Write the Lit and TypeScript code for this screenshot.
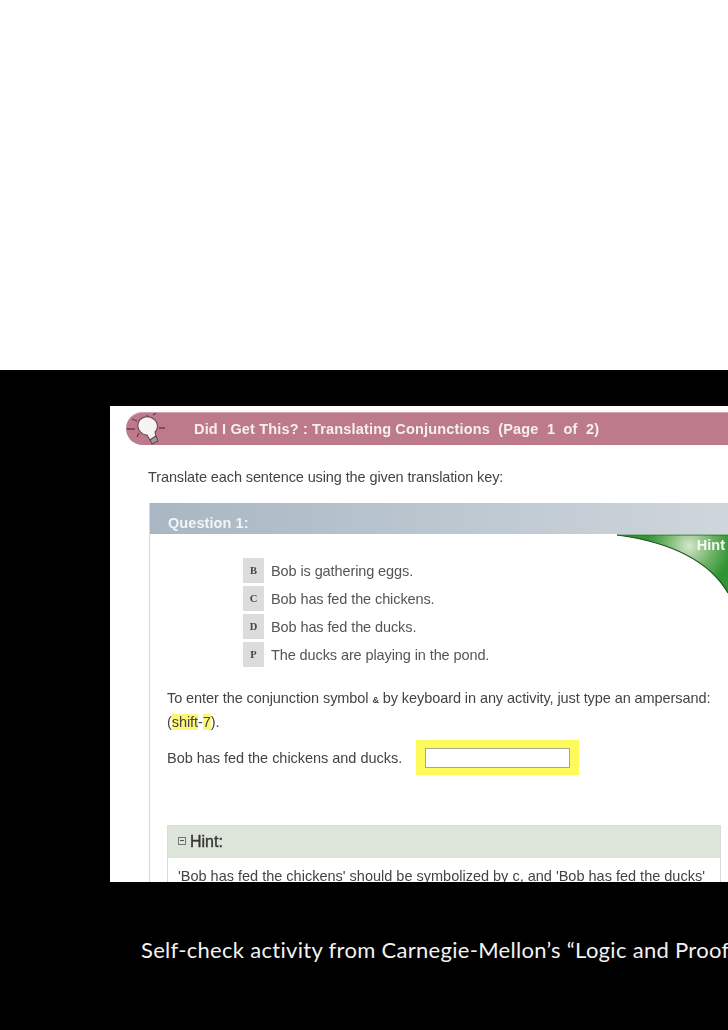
import { LitElement, html, css } from "lit";
import { customElement } from "lit/decorators.js";

@customElement("app-root")
export class AppRoot extends LitElement {
  static styles = css`
    :host { display: block; width: 728px; height: 1030px; overflow: hidden; background: #fff; font-family: "Liberation Sans", Arial, sans-serif; }
    .top { height: 370px; background: #fff; }
    .slide { height: 660px; background: #000; padding-top: 36px; box-sizing: border-box; overflow: hidden; }
    .shot { margin-left: 110px; width: 618px; height: 476px; background: #fff; overflow: hidden; box-sizing: border-box; padding-top: 6px; filter: blur(0.35px); position: relative; }
    .bar { margin-left: 16px; height: 33px; background: #bc7a8a; border-radius: 17px 0 0 17px; display: flex; align-items: center; color: #f6eef0; font-size: 14.5px; font-weight: bold; white-space: pre; letter-spacing: 0.16px; border-top: 1px solid #d3a5b0; box-sizing: border-box; }
    .bulb { width: 50px; height: 33px; margin: -1px 18px 0 0; flex: none; }
    .intro { margin: 23px 0 0 38px; font-size: 14.5px; line-height: 18px; color: #444; letter-spacing: -0.11px; }
    .q { margin: 17px 0 0 39px; border-left: 1px solid #d4d8db; height: 400px; position: relative; }
    .qh { height: 31px; background: linear-gradient(90deg, #a8b7c3, #cfd6dc); color: #f2f4f5; font-size: 14.5px; font-weight: bold; letter-spacing: 0.08px; display: flex; align-items: center; padding: 9px 0 0 18px; box-sizing: border-box; }
    .tab { position: absolute; right: 0; top: 31px; width: 111px; height: 61px; }
    .tabtext { position: absolute; right: 3px; top: 34px; color: #f4f8f2; font-size: 14.5px; font-weight: bold; }
    .keys { margin: 24px 0 0 93px; display: grid; grid-template-columns: 21px auto; column-gap: 7px; row-gap: 3px; justify-content: start; }
    .k { height: 25px; background: #dcdcdc; color: #444; font: bold 10.5px "Liberation Serif", serif; display: flex; align-items: center; justify-content: center; }
    .v { height: 25px; display: flex; align-items: center; font-size: 14.5px; color: #555; letter-spacing: -0.1px; }
    .para { margin: 20px 0 0 17px; width: 570px; font-size: 14.5px; line-height: 22px; color: #444; letter-spacing: -0.08px; }
    .sym { font-size: 9px; font-weight: bold; }
    mark { background: #fbf67c; color: #444; }
    .ans { margin: 7px 0 0 17px; display: flex; align-items: center; gap: 14px; font-size: 14.5px; color: #444; letter-spacing: -0.03px; }
    .ybox { width: 163px; height: 35px; background: #fdfb5c; display: flex; align-items: center; justify-content: center; box-sizing: border-box; }
    .inp { width: 145px; height: 20px; background: #fff; border: 1px solid #a8a888; box-sizing: border-box; }
    .hint { margin: 50px 0 0 17px; width: 554px; border: 1px solid #d8ddd6; box-sizing: border-box; }
    .hh { height: 32px; background: #dde4d9; display: flex; align-items: center; padding-left: 10px; gap: 4px; font-size: 16px; color: #333; }
    .hh .lab { -webkit-text-stroke: 0.35px #333; }
    .minus { width: 8px; height: 8px; border: 1px solid #777; box-sizing: border-box; display: flex; align-items: center; justify-content: center; margin-bottom: 3px; }
    .minus i { width: 4px; height: 1px; background: #555; display: block; }
    .hb { padding: 10px 0 0 10px; font-size: 14.5px; color: #444; white-space: nowrap; }
    .cap { margin: 56px 0 0 141px; color: #f2f2f2; font: 22px/24px Lato, "Open Sans", sans-serif; letter-spacing: 0.3px; white-space: nowrap; }
  `;

  render() {
    const keys = [
      ["B", "Bob is gathering eggs."],
      ["C", "Bob has fed the chickens."],
      ["D", "Bob has fed the ducks."],
      ["P", "The ducks are playing in the pond."],
    ];
    return html`
      <div class="top"></div>
      <div class="slide">
        <div class="shot">
          <div class="bar">
            <svg class="bulb" viewBox="0 0 50 33" fill="none">
              <path d="M12 12c1-6 8-9 14-6 6 3 7 10 3 14l1 4-6 4-3-5c-5 0-10-5-9-11z" fill="#f5f3f3" stroke="#6f4350" stroke-width="1.1"/>
              <path d="M24 28l2 4 6-3-2-5z" fill="#9a9a9a" stroke="#5a3a44" stroke-width="1"/>
              <path d="M1 17h8M6 7l5 2M21 3l1 2M30 1l-3 2M33 16h6M11 25l2-4" stroke="#6e3c4a" stroke-width="1.3"/>
            </svg><span>Did I Get This? : Translating Conjunctions  (Page  1  of  2)</span>
          </div>
          <div class="intro">Translate each sentence using the given translation key:</div>
          <div class="q">
            <div class="qh">Question 1:</div>
            <svg class="tab" viewBox="0 0 111 61">
              <defs>
                <radialGradient id="g" gradientUnits="userSpaceOnUse" cx="72" cy="12" r="42">
                  <stop offset="0" stop-color="#d4e6cc"/>
                  <stop offset="0.55" stop-color="#73b46a"/>
                  <stop offset="1" stop-color="#2f9432"/>
                </radialGradient>
              </defs>
              <path d="M0 1H111V59C90 23 45 7 0 1Z" fill="url(#g)"/>
              <path d="M0 1C45 7 90 23 111 59" fill="none" stroke="#1c4f22" stroke-width="1.2"/>
              <path d="M0 1H111" stroke="#2f6f35" stroke-width="1"/>
            </svg>
            <div class="tabtext">Hint</div>
            <div class="keys">
              ${keys.map(([k, v]) => html`<div class="k">${k}</div><div class="v">${v}</div>`)}
            </div>
            <div class="para">To enter the conjunction symbol <span class="sym">&amp;</span> by keyboard in any activity, just type an ampersand: (<mark>shift</mark>-<mark>7</mark>).</div>
            <div class="ans">
              <span>Bob has fed the chickens and ducks.</span>
              <div class="ybox"><div class="inp"></div></div>
            </div>
            <div class="hint">
              <div class="hh"><span class="minus"><i></i></span><span class="lab">Hint:</span></div>
              <div class="hb">'Bob has fed the chickens' should be symbolized by c, and 'Bob has fed the ducks'</div>
            </div>
          </div>
        </div>
        <div class="cap">Self-check activity from Carnegie-Mellon’s “Logic and Proofs”</div>
      </div>
    `;
  }
}
